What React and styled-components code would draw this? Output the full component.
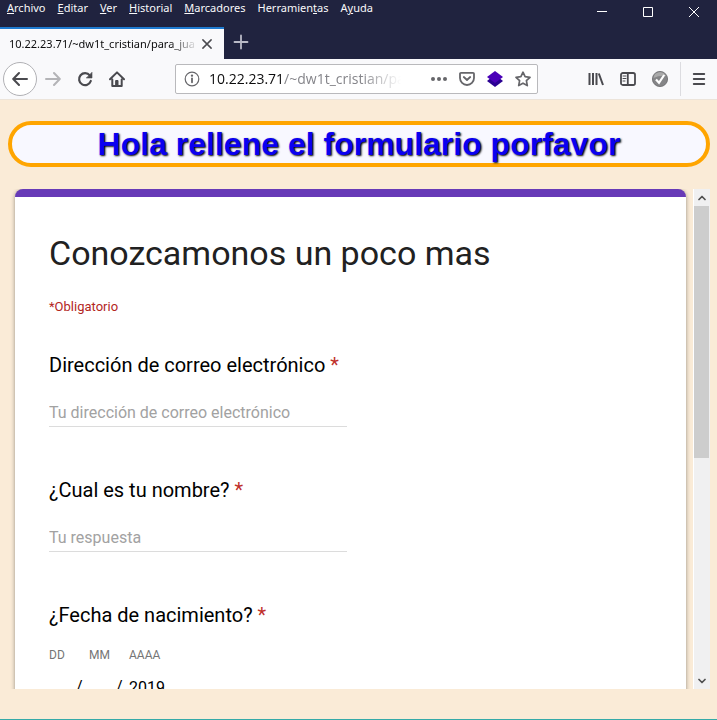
import React from 'react';
import styled, { createGlobalStyle } from 'styled-components';

const GlobalStyle = createGlobalStyle`
  *, *::before, *::after { box-sizing: border-box; }
  body { margin: 0; background: #faebd7; }
  button, input { font: inherit; color: inherit; }
  button { display: inline-flex; align-items: center; justify-content: center; margin: 0; padding: 0; border: 0; background: none; }
  svg { display: block; flex: none; }
`;

const Window = styled.div`
  display: flex;
  flex-direction: column;
  height: 100vh;
  overflow: hidden;
  border-bottom: 1px solid #35aaa8;
  font-family: "Open Sans", "Noto Sans", sans-serif;
`;

const TitleBar = styled.header`
  display: flex;
  justify-content: space-between;
  align-items: flex-start;
  height: 27px;
  flex: none;
  background: #20233f;
  color: #f9f9fa;
`;

const MenuBar = styled.nav`
  display: flex;
  gap: 12px;
  padding-left: 7px;
`;

const MenuItem = styled.button`
  height: 16px;
  font-family: "Noto Sans", sans-serif;
  font-size: 11px;
  line-height: 16px;
  white-space: pre;
`;

const WindowControls = styled.div`
  display: flex;
`;

const WindowButton = styled.button`
  width: 46px;
  height: 24px;
`;

const TabStrip = styled.div`
  display: flex;
  height: 32px;
  flex: none;
  background: #20233f;
  color: #b9bac6;
`;

const Tab = styled.div`
  display: flex;
  align-items: center;
  width: 224px;
  padding: 0 8px 0 9px;
  border-top: 2px solid #1f7bd0;
  background: #f9f9fb;
  color: #0c0c0d;
`;

const TabTitle = styled.span`
  flex: 1;
  min-width: 0;
  overflow: hidden;
  white-space: nowrap;
  font-family: "Noto Sans", sans-serif;
  font-size: 11px;
  line-height: 20px;
  mask-image: linear-gradient(to left, transparent, #000 28px);
`;

const TabClose = styled.button`
  width: 18px;
  height: 20px;
  color: #4a4a4f;
`;

const NewTab = styled.button`
  width: 34px;
  height: 30px;
`;

const Toolbar = styled.div`
  display: flex;
  align-items: center;
  height: 41px;
  flex: none;
  padding-left: 3px;
  background: #f9f9fb;
  border-bottom: 1px solid #ece4da;
  color: #4a4a4f;
`;

const BackButton = styled.button`
  width: 34px;
  height: 34px;
  border: 1px solid #b1b1b5;
  border-radius: 50%;
  background: #fff;
`;

const ToolButton = styled.button`
  width: 32px;
  height: 32px;
  color: ${(p) => (p.$dim ? '#b4b4b7' : 'inherit')};
`;

const AddressBar = styled.div`
  display: flex;
  align-items: center;
  flex: 1;
  min-width: 0;
  height: 30px;
  margin: 0 42px;
  padding: 0 0 0 8px;
  border: 1px solid #b9b9bc;
  border-radius: 2px;
  background: #fff;
  color: #66666a;
`;

const AddressText = styled.div`
  flex: 1;
  min-width: 0;
  overflow: hidden;
  white-space: nowrap;
  padding-left: 9px;
  font-size: 14px;
  line-height: 22px;
  color: #85858a;
  mask-image: linear-gradient(to left, transparent 24px, #000 64px);
`;

const Host = styled.span`
  color: #0c0c0d;
`;

const AddressButton = styled.button`
  width: 28px;
  height: 28px;
`;

const MenuButton = styled.button`
  width: 37px;
  height: 34px;
  margin-left: 4px;
  border-left: 1px solid #dcdce0;
`;

const Page = styled.main`
  display: flex;
  flex-direction: column;
  flex: 1;
  min-height: 0;
  padding: 21px 7px 30px 8px;
  background: #faebd7;
`;

const Banner = styled.h1`
  flex: none;
  margin: 0 0 22px;
  border: 4px solid orange;
  border-radius: 25px;
  background: ghostwhite;
  color: #0a00f0;
  font: bold 32px/38px "Liberation Sans", Arial, sans-serif;
  text-align: center;
  text-shadow: 1px 1px 2px #000;
`;

const Frame = styled.section`
  display: flex;
  flex: 1;
  min-height: 0;
  overflow: hidden;
  font-family: Roboto, sans-serif;
`;

const FrameBody = styled.div`
  flex: 1;
  min-width: 0;
  overflow: hidden;
  padding: 0 7px;
`;

const Card = styled.form`
  padding: 36px 34px;
  min-height: 640px;
  border-top: 8px solid #673ab7;
  border-radius: 8px 8px 0 0;
  background: #fff;
  box-shadow: 0 1px 4px rgba(0, 0, 0, 0.4);
`;

const FormTitle = styled.h2`
  margin: 0;
  font-size: 34px;
  font-weight: 400;
  line-height: 40px;
  color: #212121;
`;

const Note = styled.p`
  margin: 24px 0 36px;
  font-size: 13px;
  line-height: 20px;
  color: #b3261e;
`;

const Question = styled.div`
  margin-bottom: 51px;
`;

const Label = styled.label`
  display: block;
  font-size: 20px;
  line-height: 24px;
  color: #000;
`;

const Required = styled.span`
  color: #c0302b;
`;

const TextInput = styled.input`
  display: block;
  width: 298px;
  max-width: 100%;
  height: 28px;
  margin-top: 22px;
  padding: 0;
  border: 0;
  border-bottom: 1px solid #dcdcdc;
  background: none;
  outline: none;
  font-size: 16px;
  color: #212121;
  &::placeholder { color: #a2a2a2; opacity: 1; }
`;

const DateRow = styled.div`
  display: flex;
  margin-top: 20px;
`;

const DatePart = styled.label`
  display: grid;
  grid-template-columns: 27px 13px;
  width: 40px;
  row-gap: 12px;
  font-size: 12px;
  line-height: 16px;
  color: #757575;
`;

const DateCaption = styled.span`
  grid-column: 1 / -1;
`;

const DateInput = styled.input`
  width: ${(p) => (p.$wide ? '40px' : '24px')};
  height: 24px;
  padding: 0;
  border: 0;
  background: none;
  outline: none;
  font-size: 16px;
  color: #000;
`;

const Slash = styled.span`
  font-size: 16px;
  line-height: 24px;
  color: #000;
`;

const Scrollbar = styled.div`
  display: flex;
  flex-direction: column;
  width: 17px;
  flex: none;
  border-left: 1px solid #fff;
  background: #f0f0f1;
  color: #505050;
`;

const ScrollButton = styled.button`
  width: 16px;
  height: 17px;
  flex: none;
`;

const Track = styled.div`
  flex: 1;
  padding-right: 1px;
`;

const Thumb = styled.div`
  height: 54%;
  background: #cdcdcd;
`;

const Icon = ({ size = 16, width = 2, children }) => (
  <svg width={size} height={size} viewBox="0 0 16 16" fill="none" stroke="currentColor" strokeWidth={width} strokeLinecap="round" strokeLinejoin="round" aria-hidden="true">
    {children}
  </svg>
);

const menus = [
  ['', 'A', 'rchivo'],
  ['', 'E', 'ditar'],
  ['', 'V', 'er'],
  ['', 'H', 'istorial'],
  ['', 'M', 'arcadores'],
  ['Herramien', 't', 'as'],
  ['A', 'y', 'uda'],
];

const textQuestions = [
  { id: 'correo', label: 'Dirección de correo electrónico', hint: 'Tu dirección de correo electrónico', type: 'email' },
  { id: 'nombre', label: '¿Cual es tu nombre?', hint: 'Tu respuesta', type: 'text' },
];

export default function App() {
  return (
    <Window>
      <GlobalStyle />
      <TitleBar>
        <MenuBar>
          {menus.map(([before, key, after]) => (
            <MenuItem key={before + key + after}><span>{before}<u>{key}</u>{after}</span></MenuItem>
          ))}
        </MenuBar>
        <WindowControls>
          <WindowButton aria-label="Minimizar">
            <svg width="10" height="10" stroke="#fff"><path d="M0 4.5h10" /></svg>
          </WindowButton>
          <WindowButton aria-label="Maximizar">
            <svg width="10" height="10" fill="none" stroke="#fff"><path d="M.5.5h9v9h-9z" /></svg>
          </WindowButton>
          <WindowButton aria-label="Cerrar">
            <svg width="10" height="10" stroke="#fff"><path d="m0 0 10 10M10 0 0 10" /></svg>
          </WindowButton>
        </WindowControls>
      </TitleBar>

      <TabStrip>
        <Tab>
          <TabTitle>10.22.23.71/~dw1t_cristian/para_jua</TabTitle>
          <TabClose aria-label="Cerrar pestaña">
            <Icon size={12}><path d="M2.5 2.5l11 11M13.5 2.5l-11 11" /></Icon>
          </TabClose>
        </Tab>
        <NewTab aria-label="Nueva pestaña">
          <Icon width={1.8}><path d="M8 1.5v13M1.5 8h13" /></Icon>
        </NewTab>
      </TabStrip>

      <Toolbar>
        <BackButton aria-label="Atrás">
          <Icon><path d="M15 8H1.5M7 2 1.2 8 7 14" /></Icon>
        </BackButton>
        <ToolButton $dim aria-label="Adelante">
          <Icon><path d="M1 8h13.5M9 2l5.8 6L9 14" /></Icon>
        </ToolButton>
        <ToolButton aria-label="Recargar">
          <Icon width={2.2}>
            <path d="M12.8 4.4A6 6 0 1 0 13.8 10" />
            <path d="M15 1.6V7H9.6z" fill="currentColor" strokeWidth="0.6" />
          </Icon>
        </ToolButton>
        <ToolButton aria-label="Inicio">
          <Icon>
            <path d="M1 8.2 8 1.4l7 6.8M3.3 8.5V15h9.4V8.5" />
            <path d="M7 9.5h2V15H7z" fill="currentColor" strokeWidth="1" />
          </Icon>
        </ToolButton>

        <AddressBar>
          <Icon width={1.2}>
            <circle cx="8" cy="8" r="6.8" />
            <path d="M8 7.3v4" strokeWidth="1.8" />
            <circle cx="8" cy="4.6" r="0.6" fill="currentColor" />
          </Icon>
          <AddressText><Host>10.22.23.71</Host>/~dw1t_cristian/pa</AddressText>
          <AddressButton aria-label="Acciones de página">
            <Icon><g fill="currentColor" stroke="none"><circle cx="2" cy="8" r="2" /><circle cx="8" cy="8" r="2" /><circle cx="14" cy="8" r="2" /></g></Icon>
          </AddressButton>
          <AddressButton aria-label="Guardar en Pocket">
            <Icon width={1.8}>
              <path d="M2 1.8h12a1 1 0 0 1 1 1V7A7 7 0 0 1 1 7V2.8a1 1 0 0 1 1-1z" />
              <path d="M4.8 6 8 9l3.2-3" />
            </Icon>
          </AddressButton>
          <AddressButton aria-label="Capas">
            <svg width="16" height="16" viewBox="0 0 16 16"><path d="m0 10 2.5-2h11l2.5 2-8 6z" fill="#2a0092" /><path d="m8 0 8 6-8 6-8-6z" fill="#4a00b8" /></svg>
          </AddressButton>
          <AddressButton aria-label="Añadir a marcadores">
            <Icon width={1.7}><path d="m8 1.2 2.1 4.5 4.9.6-3.6 3.4.9 4.9L8 12.2l-4.3 2.4.9-4.9L1 6.3l4.9-.6z" /></Icon>
          </AddressButton>
        </AddressBar>

        <ToolButton aria-label="Catálogo">
          <Icon><path d="M1.5 2v12M5 2v12M8.5 2v12M10.8 2.5 15 14" strokeLinecap="butt" /></Icon>
        </ToolButton>
        <ToolButton aria-label="Barra lateral">
          <Icon width={1.8}>
            <rect x="1" y="2" width="14" height="12" rx="1.8" />
            <path d="M7.8 2v12" />
            <path d="M3 5h3M3 7.5h3M3 10h2" strokeWidth="1" />
          </Icon>
        </ToolButton>
        <ToolButton aria-label="Verificación">
          <svg width="16" height="16" viewBox="0 0 16 16">
            <circle cx="8" cy="8" r="7.6" fill="#858587" stroke="#68686b" strokeWidth="0.8" />
            <path d="M1.5 7A6.6 6.6 0 0 1 14 5Q8 4 1.5 7z" fill="#aaa" />
            <path d="m4 8.5 3 3.3L12.2 4" fill="none" stroke="#fff" strokeWidth="2.2" />
          </svg>
        </ToolButton>
        <MenuButton aria-label="Abrir menú">
          <Icon><path d="M2.8 3h10.4M2.8 8h10.4M2.8 13h10.4" /></Icon>
        </MenuButton>
      </Toolbar>

      <Page>
        <Banner>Hola rellene el formulario porfavor</Banner>
        <Frame>
          <FrameBody>
            <Card>
              <FormTitle>Conozcamonos un poco mas</FormTitle>
              <Note>*Obligatorio</Note>
              {textQuestions.map((q) => (
                <Question key={q.id}>
                  <Label htmlFor={q.id}>{q.label} <Required>*</Required></Label>
                  <TextInput id={q.id} type={q.type} placeholder={q.hint} />
                </Question>
              ))}
              <Question role="group" aria-labelledby="fecha">
                <Label as="div" id="fecha">¿Fecha de nacimiento? <Required>*</Required></Label>
                <DateRow>
                  <DatePart><DateCaption>DD</DateCaption><DateInput /><Slash>/</Slash></DatePart>
                  <DatePart><DateCaption>MM</DateCaption><DateInput /><Slash>/</Slash></DatePart>
                  <DatePart><DateCaption>AAAA</DateCaption><DateInput $wide defaultValue="2019" /></DatePart>
                </DateRow>
              </Question>
            </Card>
          </FrameBody>
          <Scrollbar>
            <ScrollButton aria-label="Subir"><Icon size={8} width={3.4}><path d="m2 11 6-6 6 6" /></Icon></ScrollButton>
            <Track><Thumb /></Track>
            <ScrollButton aria-label="Bajar"><Icon size={8} width={3.4}><path d="m2 5 6 6 6-6" /></Icon></ScrollButton>
          </Scrollbar>
        </Frame>
      </Page>
    </Window>
  );
}
